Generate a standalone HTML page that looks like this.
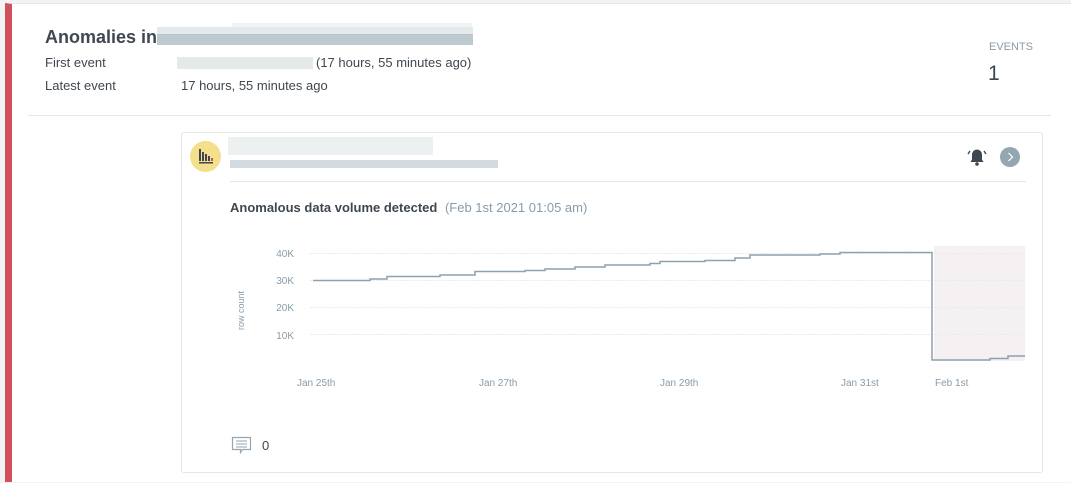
<!DOCTYPE html>
<html style="height:483px;overflow:hidden"><head><meta charset="utf-8"><style>
html,body{margin:0;width:1071px;height:483px;overflow:hidden}
body{background:#fff;font-family:"Liberation Sans",sans-serif;position:relative}
.a{position:absolute}
.blur{position:absolute;background:#c9d3da;opacity:.8}
</style></head><body>
<div class="a" style="left:0;top:0;width:1071px;height:483px;background:#f3f3f3"></div>
<div class="a" style="left:5px;top:3px;width:1060px;height:478px;background:#fff;border-top:1px solid #e6e9eb;border-right:1px solid #e6e9eb;border-left:7px solid #d24f5c"></div>
<div class="a" style="left:45px;top:27px;font-size:18px;font-weight:bold;color:#3f4750">Anomalies in</div>
<div class="blur" style="left:157px;top:27px;width:316px;height:8px;background:#dde3e7"></div>
<div class="blur" style="left:157px;top:34px;width:316px;height:11px;background:#aebbc4"></div>
<div class="blur" style="left:232px;top:23px;width:240px;height:4px;background:#eceff1"></div>
<div class="a" style="left:45px;top:55px;font-size:13px;color:#3f4750">First event</div>
<div class="blur" style="left:177px;top:57px;width:136px;height:12px;background:#dfe4e4"></div>
<div class="a" style="left:316px;top:55px;font-size:13px;color:#3f4750">(17 hours, 55 minutes ago)</div>
<div class="a" style="left:45px;top:78px;font-size:13px;color:#3f4750">Latest event</div>
<div class="a" style="left:181px;top:78px;font-size:13px;color:#3f4750">17 hours, 55 minutes ago</div>
<div class="a" style="left:989px;top:41px;font-size:11px;color:#8a9ba8">EVENTS</div>
<div class="a" style="left:988px;top:62px;font-size:21px;color:#3f4750">1</div>
<div class="a" style="left:28px;top:115px;width:1023px;height:1px;background:#e3e7ea"></div>
<div class="a" style="left:181px;top:132px;width:860px;height:339px;border:1px solid #e3e7ea;border-radius:3px"></div>
<div class="a" style="left:190px;top:141px;width:31px;height:31px;border-radius:50%;background:#f4e08c"></div>
<svg class="a" style="left:197px;top:147px" width="18" height="18"><g fill="#3f4750"><rect x="2" y="2" width="2" height="12"/><rect x="5" y="5" width="2" height="9"/><rect x="8" y="7" width="2" height="7"/><rect x="11" y="9" width="2" height="5"/><rect x="14" y="11" width="2" height="3"/><rect x="2" y="15" width="14" height="1.5"/></g><rect x="14" y="11" width="2" height="3" fill="#d24f5c"/></svg>
<div class="blur" style="left:228px;top:137px;width:205px;height:18px;background:#e8ecee"></div>
<div class="blur" style="left:230px;top:160px;width:268px;height:8px;background:#c8d2d9"></div>
<div class="a" style="left:230px;top:181px;width:796px;height:1px;background:#e3e7ea"></div>
<svg class="a" style="left:966px;top:146px" width="22" height="22"><path d="M11 3.5a5 5 0 0 0-5 5v5l-1.5 2.5h13L16 13.5v-5a5 5 0 0 0-5-5z" fill="#3f4750"/><circle cx="11" cy="18" r="1.8" fill="#3f4750"/><path d="M4 5l-2 3M18 5l2 3" stroke="#3f4750" stroke-width="1.4"/></svg>
<div class="a" style="left:1000px;top:147px;width:20px;height:20px;border-radius:50%;background:#95a6b3"></div>
<svg class="a" style="left:1000px;top:147px" width="20" height="20"><path d="M8.5 6l4 4-4 4" stroke="#fff" stroke-width="1.2" fill="none"/></svg>
<div class="a" style="left:230px;top:200px;font-size:13px;font-weight:bold;color:#3f4750">Anomalous data volume detected <span style="font-weight:normal;color:#8a9ba8;margin-left:4px">(Feb 1st 2021 01:05 am)</span></div>
<svg class="a" style="left:0;top:0" width="1071" height="483" font-family="Liberation Sans" font-size="10" fill="#8a9ba8">
<rect x="934" y="246" width="91" height="115" fill="#f5f0f1"/>
<g stroke="#e8ecee" stroke-width="1" stroke-dasharray="2 1"><line x1="310" y1="253.5" x2="1025" y2="253.5"/><line x1="310" y1="280.5" x2="1025" y2="280.5"/><line x1="310" y1="307.5" x2="1025" y2="307.5"/><line x1="310" y1="334.5" x2="1025" y2="334.5"/></g>
<text x="294" y="257" text-anchor="end">40K</text><text x="294" y="284" text-anchor="end">30K</text><text x="294" y="311" text-anchor="end">20K</text><text x="294" y="339" text-anchor="end">10K</text>
<text transform="translate(244,330) rotate(-90)" font-size="9">row count</text>
<text x="297" y="386">Jan 25th</text><text x="479" y="386">Jan 27th</text><text x="660" y="386">Jan 29th</text><text x="841" y="386">Jan 31st</text><text x="935" y="386">Feb 1st</text>
<path d="M313 280.5H370V279H387V276.5H440V275H475V271.5H525V270.5H545V269H575V267H605V265H650V263.5H660V261.5H705V260.5H735V258H750V255H820V254H840V252.5H932V360H990V358.5H1008V356H1025" fill="none" stroke="#8fa1ad" stroke-width="1.5"/>
</svg>
<svg class="a" style="left:231px;top:436px" width="22" height="20"><path d="M1.5 1.5h18v12h-8l-2 3v-3h-8z" fill="none" stroke="#95a6b3" stroke-width="1.2"/><path d="M5 5h11M5 8h11M5 11h11" stroke="#95a6b3" stroke-width="1"/></svg>
<div class="a" style="left:262px;top:438px;font-size:13px;color:#3f4750">0</div>
</body></html>
